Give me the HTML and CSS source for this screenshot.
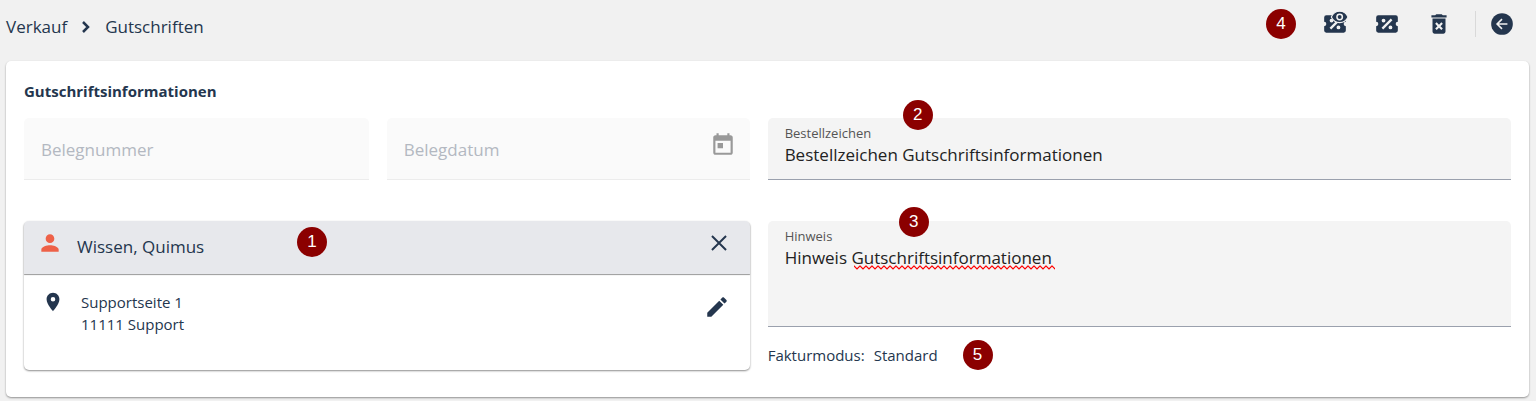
FILE: index.html
```
<!DOCTYPE html>
<html lang="de">
<head>
    <meta charset="UTF-8">
    <meta name="viewport" content="width=device-width, initial-scale=1.0">
    <title>Gutschriften</title>
    <link rel="stylesheet" href="styles.css">
</head>

<body>
    <header class="topbar">
        <nav class="breadcrumb" aria-label="Navigation">
            <a href="#">Verkauf</a>
            <svg class="chevron" viewBox="0 0 10 14"><path d="M2 2l5 5-5 5" /></svg>
            <a href="#">Gutschriften</a>
        </nav>

        <div class="toolbar">
            <span class="marker">4</span>
            <button class="icon-button" type="button" aria-label="Gutschein Vorschau">
                <svg class="icon" viewBox="0 0 24 24">
                    <path fill-rule="evenodd" d="M4 4A2 2 0 0 0 2 6V10A2 2 0 0 1 4 12A2 2 0 0 1 2 14V18A2 2 0 0 0 4 20H20A2 2 0 0 0 22 18V14A2 2 0 0 1 20 12A2 2 0 0 1 22 10V6A2 2 0 0 0 20 4ZM15.5 7L17 8.5L8.5 17L7 15.5ZM8.81 7.04A1.77 1.77 0 0 1 8.81 10.58A1.77 1.77 0 0 1 8.81 7.04ZM15.19 13.42A1.77 1.77 0 0 1 15.19 16.96A1.77 1.77 0 0 1 15.19 13.42Z" />
                    <path class="eye-outline" d="M8.6 5.5C10.2 2.2 13 .3 16.300 .3S22.400 2.200 24 5.500C22.400 8.800 19.600 10.700 16.300 10.700S10.200 8.800 8.600 5.500Z" />
                    <circle class="eye-ring" cx="16.300" cy="5.500" r="2.500" />
                </svg>
            </button>
            <button class="icon-button" type="button" aria-label="Rabatt">
                <svg class="icon" viewBox="0 0 24 24">
                    <path fill-rule="evenodd" d="M4 4A2 2 0 0 0 2 6V10A2 2 0 0 1 4 12A2 2 0 0 1 2 14V18A2 2 0 0 0 4 20H20A2 2 0 0 0 22 18V14A2 2 0 0 1 20 12A2 2 0 0 1 22 10V6A2 2 0 0 0 20 4ZM15.5 7L17 8.5L8.5 17L7 15.5ZM8.81 7.04A1.77 1.77 0 0 1 8.81 10.58A1.77 1.77 0 0 1 8.81 7.04ZM15.19 13.42A1.77 1.77 0 0 1 15.19 16.96A1.77 1.77 0 0 1 15.19 13.42Z" />
                </svg>
            </button>
            <button class="icon-button" type="button" aria-label="Löschen">
                <svg class="icon" viewBox="0 0 24 24">
                    <path fill-rule="evenodd" d="M6 19c0 1.1.9 2 2 2h8c1.1 0 2-.9 2-2V7H6v12zm2.460-7.120l1.410-1.410L12 12.590l2.120-2.120 1.410 1.410L13.410 14l2.120 2.120-1.410 1.410L12 15.410l-2.120 2.120-1.410-1.410L10.590 14l-2.130-2.120zM15.500 4l-1-1h-5l-1 1H5v2h14V4z" />
                </svg>
            </button>
            <button class="icon-button back-button" type="button" aria-label="Zurück">
                <svg class="icon" viewBox="0 0 24 24">
                    <circle cx="12" cy="12" r="10" />
                    <path class="arrow" d="M17 12H8M12 7.500L7.500 12l4.500 4.500" />
                </svg>
            </button>
        </div>
    </header>

    <main class="card">
        <h1 class="card-title">Gutschriftsinformationen</h1>

        <div class="form-grid">
            <div class="field-row">
                <div class="field disabled">
                    <input type="text" placeholder="Belegnummer" aria-label="Belegnummer" disabled>
                </div>
                <div class="field disabled date-field">
                    <input type="text" placeholder="Belegdatum" aria-label="Belegdatum" disabled>
                    <button class="icon-button" type="button" aria-label="Datum wählen" disabled>
                        <svg class="icon" viewBox="0 0 24 24">
                            <path fill-rule="evenodd" d="M19 4h-1V2h-2v2H8V2H6v2H5c-1.110 0-2 .9-2 2v14c0 1.100.890 2 2 2h14c1.100 0 2-.9 2-2V6c0-1.100-.9-2-2-2zm0 16H5V9h14v11zM7 11h5v5H7z" />
                        </svg>
                    </button>
                </div>
            </div>

            <div class="field">
                <label for="bestellzeichen">Bestellzeichen</label>
                <input type="text" id="bestellzeichen" value="Bestellzeichen Gutschriftsinformationen">
                <span class="marker marker-order">2</span>
            </div>

            <section class="customer">
                <div class="customer-header">
                    <svg class="icon person" viewBox="0 0 24 24">
                        <path d="M12 12c2.210 0 4-1.790 4-4s-1.790-4-4-4-4 1.790-4 4 1.790 4 4 4zm0 2c-2.670 0-8 1.340-8 4v2h16v-2c0-2.660-5.330-4-8-4z" />
                    </svg>
                    <span class="customer-name">Wissen, Quimus</span>
                    <button class="icon-button" type="button" aria-label="Kunde entfernen">
                        <svg class="icon close" viewBox="0 0 24 24"><path d="M5.500 5.500l13 13M18.500 5.500l-13 13" /></svg>
                    </button>
                    <span class="marker marker-customer">1</span>
                </div>
                <div class="customer-body">
                    <svg class="icon pin" viewBox="0 0 24 24">
                        <path fill-rule="evenodd" d="M12 2C8.130 2 5 5.130 5 9c0 5.250 7 13 7 13s7-7.750 7-13c0-3.870-3.130-7-7-7zm0 9.500a2.500 2.500 0 0 1 0-5 2.500 2.500 0 0 1 0 5z" />
                    </svg>
                    <address class="address">Supportseite 1<br>11111 Support</address>
                    <button class="icon-button" type="button" aria-label="Adresse bearbeiten">
                        <svg class="icon" viewBox="0 0 24 24">
                            <path d="M3 17.250V21h3.750L17.810 9.940l-3.750-3.750L3 17.250zM20.710 7.040c.390-.390.390-1.020 0-1.410l-2.340-2.340c-.390-.390-1.020-.390-1.410 0l-1.830 1.830 3.750 3.750 1.830-1.830z" />
                        </svg>
                    </button>
                </div>
            </section>

            <div class="note-column">
                <div class="field">
                    <label for="hinweis">Hinweis</label>
                    <textarea id="hinweis" rows="2">Hinweis Gutschriftsinformationen</textarea>
                    <svg class="squiggle" aria-hidden="true">
                        <defs>
                            <pattern id="wave" width="6" height="5" patternUnits="userSpaceOnUse">
                                <path d="M-1 0l1 1 3 3 3-3 1-1" />
                            </pattern>
                        </defs>
                        <rect width="100%" height="5" fill="url(#wave)" />
                    </svg>
                    <span class="marker marker-note">3</span>
                </div>
                <div class="mode">
                    <span>Fakturmodus:</span>
                    <span>Standard</span>
                    <span class="marker">5</span>
                </div>
            </div>
        </div>
    </main>
</body>
</html>
```
FILE: styles.css
```
* {
    box-sizing: border-box;
}

body {
    margin: 0;
    background-color: #f1f1f1;
    color: #24364e;
    font-family: 'Open Sans', 'Noto Sans', sans-serif;
    font-size: 15px;
}

.topbar {
    display: flex;
    justify-content: space-between;
    align-items: flex-start;
    padding: 8px 21px 16px 6px;
}

.breadcrumb {
    display: flex;
    align-items: center;
    gap: 14px;
    height: 37px;
    font-size: 17px;
}

.breadcrumb a {
    color: inherit;
    text-decoration: none;
}

.chevron {
    width: 10px;
    height: 14px;
    fill: none;
    stroke: #24364e;
    stroke-width: 2.5;
}

.toolbar {
    display: flex;
    align-items: center;
    gap: 26px;
    height: 32px;
}

.icon-button {
    display: flex;
    padding: 0;
    border: none;
    background: none;
    color: #24364e;
    cursor: pointer;
}

.icon {
    width: 26px;
    height: 26px;
    fill: currentColor;
    flex-shrink: 0;
    overflow: visible;
}

.eye-outline {
    stroke: #f1f1f1;
    stroke-width: 1;
}

.eye-ring {
    fill: none;
    stroke: #f1f1f1;
    stroke-width: 1.4;
}

.arrow {
    fill: none;
    stroke: #f1f1f1;
    stroke-width: 1.5;
}

.back-button {
    margin-left: -3px;
    padding-left: 13px;
    border-left: 1px solid #d9d9d9;
}

.marker {
    display: flex;
    align-items: center;
    justify-content: center;
    width: 30px;
    height: 30px;
    border-radius: 50%;
    background-color: #8b0000;
    color: #fff;
    font-family: 'Liberation Sans', sans-serif;
    font-size: 17px;
}

.card {
    margin: 0 7px 4px 6px;
    padding: 18px 18px 27px;
    background-color: #fff;
    border-radius: 5px;
    box-shadow: 0 1px 2px rgba(0, 0, 0, 0.4);
}

.card-title {
    margin: 0 0 15px;
    font-size: 15px;
    line-height: 24px;
    font-weight: 700;
}

.form-grid {
    display: grid;
    grid-template-columns: 41fr 42fr;
    gap: 41px 18px;
}

.field-row {
    display: grid;
    grid-template-columns: 19fr 20fr;
    gap: 18px;
}

.field {
    position: relative;
    padding: 6px 17px 0;
    background-color: #f4f4f4;
    border-bottom: 1px solid #9aa0ad;
    border-radius: 5px 5px 0 0;
}

.field label {
    display: block;
    font-size: 13px;
    line-height: 18px;
    color: #555;
}

.field input,
.field textarea {
    display: block;
    width: 100%;
    padding: 0;
    border: none;
    outline: none;
    background: none;
    color: #222;
    font-family: inherit;
    font-size: 17px;
    line-height: 26px;
    resize: none;
}

.field input {
    height: 26px;
    margin-bottom: 11px;
}

.field textarea {
    height: 81px;
}

.field.disabled {
    display: flex;
    align-items: center;
    padding-top: 2px;
    background-color: #fafafa;
    border-bottom-color: #ececec;
}

.field.disabled input {
    margin: 0;
    min-width: 0;
}

.field.disabled input::placeholder {
    color: #b3b8c1;
    opacity: 1;
}

.field.date-field {
    padding-right: 14px;
}

.date-field .icon-button {
    align-self: flex-start;
    margin-top: 11px;
    color: #999;
}

.squiggle {
    position: absolute;
    left: 86px;
    top: 44px;
    width: 201px;
    height: 5px;
}

.squiggle path {
    fill: none;
    stroke: #f00;
    stroke-width: 1.2;
}

.customer {
    border-radius: 5px;
    box-shadow: 0 1px 2px rgba(0, 0, 0, 0.45);
}

.customer-header {
    position: relative;
    display: flex;
    align-items: center;
    gap: 14px;
    height: 53px;
    padding: 0 18px 2px 13px;
    background-color: #e7e8ec;
    border-radius: 5px 5px 0 0;
    box-shadow: 0 1px 1px rgba(0, 0, 0, 0.4);
}

.person {
    color: #ee6148;
    margin-bottom: 7px;
}

.customer-name {
    flex: 1;
    font-size: 17px;
}

.customer-header .icon-button {
    margin-bottom: 8px;
}

.close {
    fill: none;
    stroke: currentColor;
    stroke-width: 1.8;
}

.customer-body {
    display: flex;
    align-items: flex-start;
    padding: 17px 20px 34px 18px;
}

.pin {
    width: 22px;
    height: 22px;
}

.address {
    flex: 1;
    margin-left: 17px;
    line-height: 22px;
    font-style: normal;
}

.customer-body .icon-button {
    margin-top: 3px;
}

.mode {
    display: flex;
    align-items: center;
    gap: 9px;
    margin-top: 13px;
}

.mode .marker {
    margin-left: 16px;
}

.marker-order,
.marker-note,
.marker-customer {
    position: absolute;
}

.marker-order {
    left: 135px;
    top: -18px;
}

.marker-note {
    left: 131px;
    top: -14px;
}

.marker-customer {
    left: 273px;
    top: 6px;
}
```
